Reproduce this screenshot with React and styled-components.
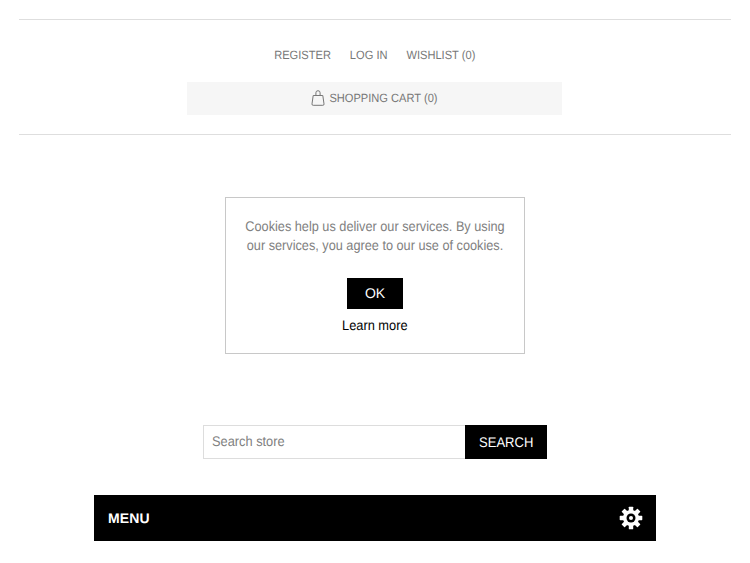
import React from "react";
import styled, { createGlobalStyle } from "styled-components";

const NARROW = 0.915;

const Global = createGlobalStyle`
  html, body { margin: 0; padding: 0; background: #fff; }
  body { font-family: "Liberation Sans", Arial, sans-serif; text-rendering: geometricPrecision; }
  button, input { text-rendering: inherit; }
`;
const Page = styled.div`
  width: 750px; height: 563px; overflow: hidden;
  display: flex; flex-direction: column; align-items: center;
  padding-top: 19px; box-sizing: border-box;
`;
const Header = styled.header`
  width: 712px; height: 116px; box-sizing: border-box;
  border-top: 1px solid #dedede; border-bottom: 1px solid #dedede;
  display: flex; flex-direction: column; align-items: center;
  padding-top: 26px;
`;
const Links = styled.nav`
  display: flex; gap: 20.5px; height: 18px; align-items: center;
  transform: scaleX(0.925);
`;
const HeaderLink = styled.a`
  font-size: 12px; color: #777; line-height: 18px; text-transform: uppercase;
`;
const Cart = styled.div`
  margin: 18px 1px 0 0; width: 375px; height: 33px; box-sizing: border-box;
  padding: 0 2px 2px 0;
  background: #f6f6f6; display: flex; align-items: center; justify-content: center; gap: 5px;
`;
const CartLabel = styled.span`
  margin: 0 -5px; transform: scaleX(0.925);
  font-size: 12px; color: #777; text-transform: uppercase; white-space: nowrap;
`;
const Dialog = styled.section`
  margin-top: 62px; width: 300px; height: 157px; box-sizing: border-box;
  border: 1px solid #c8c8c8; background: #fff;
  display: flex; flex-direction: column; align-items: center;
  padding: 19px 0 0;
`;
const DialogText = styled.p`
  margin: 0; font-size: 14px; line-height: 19px; color: #808080; text-align: center;
  width: 298px; flex-shrink: 0; transform: scaleX(0.908);
  padding: 0 5px; box-sizing: border-box;
`;
const OkButton = styled.button`
  margin-top: 23px; width: 56px; height: 31px; border: 0; padding: 0 0 2px;
  background: #000; color: #fff; font: 14px "Liberation Sans", Arial, sans-serif;
`;
const LearnMore = styled.a`
  margin-top: 7px; font-size: 14px; line-height: 18px; color: #000;
  transform: scaleX(${NARROW});
`;
const SearchForm = styled.form`
  margin-top: 71px; display: flex; width: 344px; height: 34px;
`;
const SearchInput = styled.input`
  flex: 1; min-width: 0; box-sizing: border-box; height: 34px;
  border: 1px solid #ddd; border-right: 0; padding: 0 8px 2px; outline: 0;
  font: 14px "Liberation Sans", Arial, sans-serif; color: #777;
  &::placeholder { color: #808080; opacity: 1; transform: scaleX(${NARROW}); transform-origin: left center; }
`;
const SearchButton = styled.button`
  width: 82px; height: 34px; border: 0; padding: 0; background: #000;
  display: flex; align-items: center; justify-content: center;
`;
const SearchButtonLabel = styled.span`
  color: #fff; font: 14px "Liberation Sans", Arial, sans-serif; text-transform: uppercase;
  transform: scaleX(0.93);
`;
const MenuBar = styled.div`
  margin-top: 36px; width: 562px; height: 46px; box-sizing: border-box;
  background: #000; color: #fff; display: flex; align-items: center; justify-content: space-between;
  padding: 0 13px 0 14px;
`;
const MenuLabel = styled.span`
  font-size: 14px; font-weight: 700; letter-spacing: 0.15px; text-transform: uppercase;
`;

const BagIcon = () => (
  <svg width="14" height="16" viewBox="0 0 14 16" fill="none" stroke="#777" strokeWidth="1">
    <path d="M2.2 5.5h9.6l1.2 8.4a1.2 1.2 0 0 1-1.2 1.4H2.2A1.2 1.2 0 0 1 1 13.9z" />
    <path d="M4.9 5.5V2.8a2.1 2.1 0 0 1 4.2 0v2.7" />
  </svg>
);
const teeth = [0, 45, 90, 135, 180, 225, 270, 315];
const GearIcon = () => (
  <svg width="24" height="24" viewBox="0 0 24 24" fill="#fff">
    {teeth.map((a) => (
      <rect key={a} x="9.8" y="0.7" width="4.4" height="6" rx="0.6" transform={`rotate(${a} 12 12)`} />
    ))}
    <circle cx="12" cy="12" r="8" />
    <circle cx="12" cy="12" r="4.5" fill="#000" />
    <circle cx="12" cy="12" r="2" />
  </svg>
);

export default function App() {
  return (
    <Page>
      <Global />
      <Header>
        <Links>
          <HeaderLink>Register</HeaderLink>
          <HeaderLink>Log in</HeaderLink>
          <HeaderLink>Wishlist (0)</HeaderLink>
        </Links>
        <Cart><BagIcon /><CartLabel>Shopping cart (0)</CartLabel></Cart>
      </Header>
      <Dialog>
        <DialogText>Cookies help us deliver our services. By using our services, you agree to our use of cookies.</DialogText>
        <OkButton type="button">OK</OkButton>
        <LearnMore>Learn more</LearnMore>
      </Dialog>
      <SearchForm>
        <SearchInput placeholder="Search store" />
        <SearchButton type="button"><SearchButtonLabel>Search</SearchButtonLabel></SearchButton>
      </SearchForm>
      <MenuBar>
        <MenuLabel>Menu</MenuLabel>
        <GearIcon />
      </MenuBar>
    </Page>
  );
}
